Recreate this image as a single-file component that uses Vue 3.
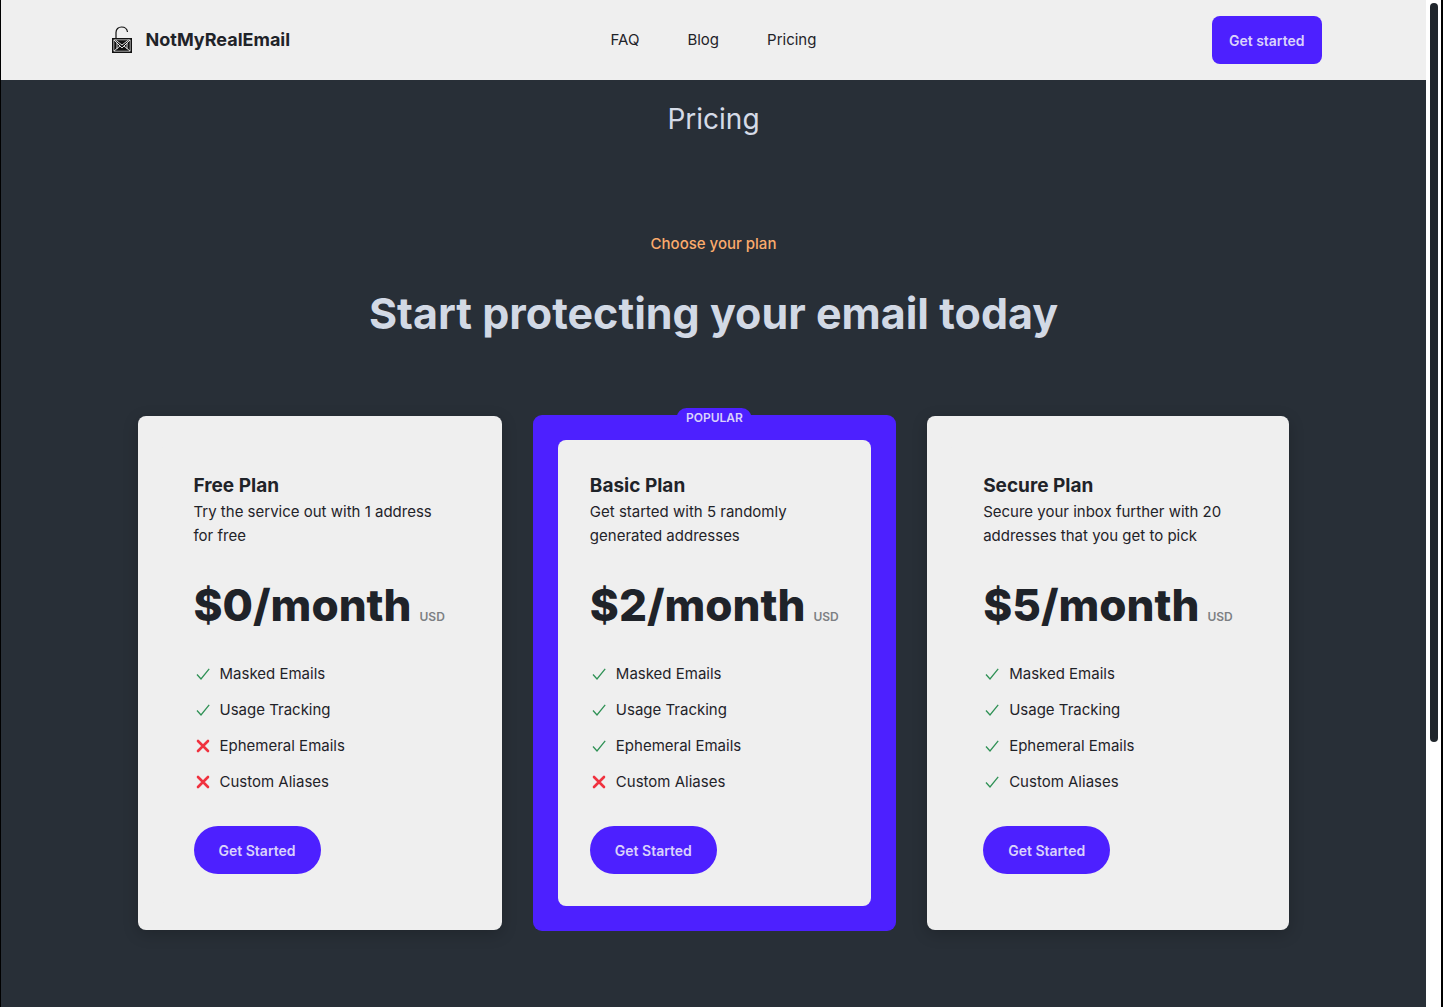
<script setup>
const links = ['FAQ', 'Blog', 'Pricing']

const features = ['Masked Emails', 'Usage Tracking', 'Ephemeral Emails', 'Custom Aliases']

const plans = [
  { name: 'Free Plan', text: 'Try the service out with 1 address for free', price: '$0/month', included: 2 },
  { name: 'Basic Plan', text: 'Get started with 5 randomly generated addresses', price: '$2/month', included: 3, popular: true },
  { name: 'Secure Plan', text: 'Secure your inbox further with 20 addresses that you get to pick', price: '$5/month', included: 4 },
]
</script>

<template>
  <div class="frame">
    <div class="page">
      <header class="header">
        <div class="bar">
          <a class="brand" href="#">
            <svg class="logo" viewBox="0 0 22 28" width="22" height="28" fill="none" aria-hidden="true">
              <path d="M5 13V6.500C5 3.200 7.300 1 10.500 1c3 0 5.500 1.600 6 5" stroke="#111" stroke-width="1.200" />
              <rect x="1" y="12" width="20" height="15" fill="#111" />
              <path d="M2.800 13.800h16.400v11.400h-16.400z" stroke="#efefef" stroke-width=".7" />
              <path d="M3 14l6 6M19 14l-6 6M3 25l6-5M19 25l-6-5M4.500 14l6.500 5 6.500-5M6 23v-6l5 5 5-5v6" stroke="#efefef" stroke-width=".9" />
            </svg>
            <span>NotMyRealEmail</span>
          </a>
          <nav class="nav">
            <a v-for="link in links" :key="link" href="#">{{ link }}</a>
          </nav>
          <button class="btn start" type="button">Get started</button>
        </div>
      </header>

      <main class="main">
        <h1 class="title">Pricing</h1>
        <p class="eyebrow">Choose your plan</p>
        <h2 class="headline">Start protecting your email today</h2>

        <div class="plans">
          <section v-for="plan in plans" :key="plan.name" class="plan" :class="{ popular: plan.popular }">
            <span v-if="plan.popular" class="badge">POPULAR</span>
            <div class="body">
              <h3 class="name">{{ plan.name }}</h3>
              <p class="text">{{ plan.text }}</p>
              <p class="price">
                <strong>{{ plan.price }}</strong>
                <span class="usd">USD</span>
              </p>
              <ul class="features">
                <li v-for="(feature, i) in features" :key="feature">
                  <svg v-if="i < plan.included" viewBox="0 0 18 18" width="18" height="18" fill="none" role="img" aria-label="Included">
                    <path d="M3 9.500l4 4.500L15.200 3.800" stroke="#2f9155" stroke-width="1.300" />
                  </svg>
                  <svg v-else viewBox="0 0 18 18" width="18" height="18" fill="none" role="img" aria-label="Not included">
                    <path d="M4 4l10 10M14 4L4 14" stroke="#f0323f" stroke-width="2.600" stroke-linecap="round" />
                  </svg>
                  <span>{{ feature }}</span>
                </li>
              </ul>
              <button class="btn pill" type="button">Get Started</button>
            </div>
          </section>
        </div>
      </main>
    </div>
    <div class="scrollbar" aria-hidden="true"><div class="thumb"></div></div>
  </div>
</template>

<style>
body {
  margin: 0;
}
</style>

<style scoped>
.frame {
  display: flex;
  box-sizing: border-box;
  min-height: 100vh;
  border-left: 1px solid #000;
  border-right: 2px solid #000;
  font-family: Inter, "Liberation Sans", sans-serif;
  font-size: 15px;
  line-height: 24px;
  color: #1f2329;
}

.page {
  flex: 1;
  background: #282f37;
}

.scrollbar {
  box-sizing: border-box;
  width: 15px;
  padding: 3px 3px 0 4px;
  background: #fff;
}

.thumb {
  height: calc(74vh - 6px);
  border-radius: 4px;
  background: #20262c;
}

h1,
h2,
h3,
p,
ul {
  margin: 0;
  padding: 0;
}

a {
  color: inherit;
  text-decoration: none;
}

.header {
  background: #efefef;
}

.bar {
  display: grid;
  grid-template-columns: 1fr auto 1fr;
  align-items: center;
  max-width: 1216px;
  height: 80px;
  margin: 0 auto;
}

.brand {
  display: flex;
  align-items: center;
  gap: 13px;
  padding-left: 5px;
  font-size: 18px;
  font-weight: 700;
}

.nav {
  display: flex;
  gap: 48px;
}

.btn {
  height: 48px;
  border: 0;
  background: #4d20ff;
  color: #dad2fb;
  font-family: inherit;
  font-size: 14px;
  font-weight: 600;
}

.start {
  justify-self: end;
  padding: 0 17px;
  border-radius: 8px;
}

.main {
  display: flex;
  flex-direction: column;
  align-items: center;
  padding: 20px 32px 76px;
}

.title {
  color: #d5dbe7;
  font-size: 28px;
  font-weight: 400;
  line-height: 38px;
}

.eyebrow {
  margin-top: 94px;
  color: #fbab6c;
  font-weight: 500;
}

.headline {
  margin-top: 32px;
  color: #d2d9e5;
  font-size: 43px;
  font-weight: 700;
  line-height: 50px;
}

.plans {
  display: grid;
  grid-template-columns: 364fr 361fr 362fr;
  gap: 32px;
  width: 100%;
  max-width: 1152px;
  margin-top: 78px;
}

.plan {
  position: relative;
  box-sizing: border-box;
  padding: 24px;
  border-radius: 8px;
  background: #efefef;
  box-shadow: 0 4px 16px rgba(0, 0, 0, 0.2);
}

.popular {
  background: #4d20ff;
  box-shadow: 0 0 0 1px #4d20ff;
}

.badge {
  position: absolute;
  top: -8px;
  left: 50%;
  transform: translateX(-50%);
  padding: 0 9px;
  border-radius: 10px;
  background: #4d20ff;
  color: #dad2fb;
  font-size: 12px;
  font-weight: 600;
  line-height: 20px;
}

.body {
  padding: 32px;
  border-radius: 8px;
  background: #efefef;
}

.name {
  font-size: 19px;
  font-weight: 700;
  line-height: 28px;
}

.price {
  display: flex;
  align-items: baseline;
  gap: 8px;
  margin-top: 32px;
  line-height: 50px;
}

.price strong {
  font-size: 44px;
  font-weight: 800;
}

.usd {
  color: #7c7f83;
  font-size: 12px;
  font-weight: 600;
  line-height: 16px;
}

.features {
  display: flex;
  flex-direction: column;
  gap: 12px;
  margin: 32px 0;
  list-style: none;
}

.features li {
  display: flex;
  align-items: center;
  gap: 8px;
}

.pill {
  padding: 0 25px;
  border-radius: 24px;
}
</style>
